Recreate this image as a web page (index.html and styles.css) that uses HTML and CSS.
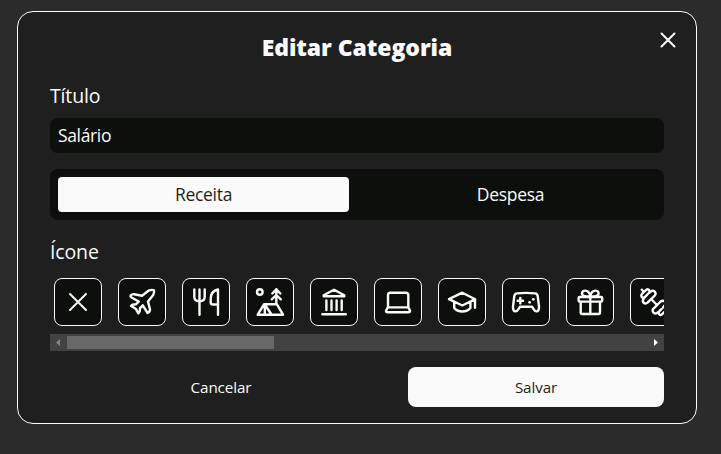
FILE: index.html
```html
<!DOCTYPE html>
<html lang="pt-BR">
<head>
<meta charset="utf-8">
<title>Editar Categoria</title>
<link rel="stylesheet" href="styles.css">
</head>
<body>
<main class="dialog">
  <button class="close" aria-label="Fechar"><svg viewBox="0 0 24 24"><path d="M5.5 5.5l13 13M18.5 5.5l-13 13"/></svg></button>
  <h1 class="title">Editar Categoria</h1>
  <label class="label">Título</label>
  <div class="field">Salário</div>
  <div class="tabs">
    <button class="tab tab-active">Receita</button>
    <button class="tab">Despesa</button>
  </div>
  <div class="label label-icon">Ícone</div>
  <div class="icons">
    <button class="icon icon-none"><svg viewBox="1 1 46 46"><path d="M16 16l16 16M32 16L16 32"/></svg></button>
    <button class="icon"><svg viewBox="1 1 46 46"><path d="M12.8 17.3Q14 16 16 16.2L24 17.8L30.5 12.7Q34 11.3 36 12.3Q36.6 14 35.2 17L30 23.5L32 31.5Q32 34 29.6 35L24.8 27.3L22 30.2L21.7 33.5L20.3 35.3L17.7 30.7L13 28L14.5 26.7L17.8 26.3L20.8 23.5L13.5 19.5Q12.2 18.8 12.8 17.3Z"/></svg></button>
    <button class="icon"><svg viewBox="1 1 46 46"><path d="M12.3 11.5V18.5Q12.3 23 16 23H19Q22.7 23 22.7 18.5V11.5M17.5 11.5V36.7M36 36.7V11.5Q28.7 13 28.7 21V24.5Q28.7 26.5 31 26.5H36"/></svg></button>
    <button class="icon"><svg viewBox="1 1 46 46"><circle cx="13.8" cy="14" r="2.8"/><path d="M30.3 11.3V26M26.3 15.5L30.3 11.3L34.3 15.5M25.8 21.3L30.3 17L34.8 21.3M18 26.3H31L37 36.7H11.7ZM18.8 26.5V36.5M18.8 26.5L25.5 36.5"/></svg></button>
    <button class="icon"><svg viewBox="1 1 46 46"><path d="M24 11.7L34.3 17.2V18.2H13.7V17.2ZM16.4 22.5V32M21.5 22.5V32M26.6 22.5V32M31.7 22.5V32M12.3 36.3H35.8"/></svg></button>
    <button class="icon"><svg viewBox="1 1 46 46"><path d="M14 29.4V17Q14 14.7 16.3 14.7H32Q34.3 14.7 34.3 17V29.4M13.8 29.4H34.5L36 32.8Q36 34.3 34.5 34.3H13.5Q12 34.3 12 32.8Z"/></svg></button>
    <button class="icon"><svg viewBox="1 1 46 46"><path d="M11 21.2L24.3 14.7L37.2 21.2L24.3 27.5ZM16.2 24V30Q19 33.5 24.3 33.5Q29.5 33.5 32.4 30V24M37 21.5V29.7"/></svg></button>
    <button class="icon"><svg viewBox="1 1 46 46"><path d="M15 15.4Q24 14.4 33 15.4Q35.2 15.7 35.7 18L37 28.5Q37.2 33.3 34.5 33.4Q32.8 33.4 31.5 31L30 28.8H18L16.5 31Q15.2 33.4 13.5 33.4Q10.8 33.3 11 28.5L12.3 18Q12.8 15.7 15 15.4ZM18.3 20V25.4M15.6 22.7H21"/><g class="dots"><circle cx="27.6" cy="24.3" r="1.4"/><circle cx="31.3" cy="21.3" r="1.4"/></g></svg></button>
    <button class="icon"><svg viewBox="1 1 46 46"><rect x="12.6" y="19" width="23.6" height="4.6" rx="1.2"/><path d="M14.7 24V34.5Q14.7 36 16.3 36H32.5Q34 36 34 34.5V24M24.3 19V36M24.3 18.8Q15.5 19 16 15Q16.6 12.5 19.5 12.6Q23.6 13 24.3 18.8Q25 13 29.1 12.6Q32 12.5 32.6 15Q33 19 24.3 18.8"/></svg></button>
    <button class="icon"><svg viewBox="1 1 46 46"><path d="M21.2 21.2L27 27M11.7 11.7L14 14M14 14L16.3 11.8Q18.2 10.6 19.3 12.3Q20 13.5 18.8 15L21.2 13.2Q23.2 12 24.9 13.8Q26.4 15.8 24.7 17.6L17.5 24.7Q15.6 26.3 13.7 24.8Q12 23.1 13.4 21.1L15.2 18.7L14.3 19.3Q12.6 20.2 11.5 18.7Q10.7 17.2 12 15.9ZM18.8 15L16.8 17M15.2 18.7L17.2 16.8"/><path d="M36.5 36.5L34.2 34.2M34.2 34.2L31.9 36.4Q30 37.6 28.9 35.9Q28.2 34.7 29.4 33.2L27 35Q25 36.2 23.3 34.4Q21.8 32.4 23.5 30.6L30.7 23.5Q32.6 21.9 34.5 23.4Q36.2 25.1 34.8 27.1L33 29.5L33.9 28.9Q35.6 28 36.7 29.5Q37.5 31 36.2 32.3ZM29.4 33.2L31.4 31.2"/></svg></button>
  </div>
  <div class="scrollbar"><i class="arrow arrow-left"></i><div class="track"><div class="thumb"></div></div><i class="arrow arrow-right"></i></div>
  <div class="actions"><button class="action">Cancelar</button><button class="action save">Salvar</button></div>
</main>
</body>
</html>
```
FILE: styles.css
```css
* { box-sizing: border-box; }
body { margin: 0; height: 454px; padding: 11px 24px 0 17px; background: #2b2b2b; overflow: hidden; color: #fafafa; font-family: "Open Sans", sans-serif; }
button { border: 0; padding: 0; margin: 0; background: none; color: inherit; font-family: inherit; }
svg { display: block; fill: none; stroke: #fafafa; stroke-width: 2; stroke-linecap: round; stroke-linejoin: round; }
.dialog { position: relative; width: 680px; height: 413px; padding: 18px 32px 0; border: 1px solid #fafafa; border-radius: 16px; background: #1f1f1f; }
.close { position: absolute; right: 16px; top: 16px; width: 24px; height: 24px; }
.title { margin: 0; height: 34px; line-height: 34px; text-align: center; font-size: 23px; font-weight: 800; letter-spacing: -0.08px; }
.label { display: block; height: 28px; margin-top: 18px; line-height: 28px; font-size: 19.5px; letter-spacing: -0.15px; }
.field { height: 35px; margin-top: 8px; padding-left: 8px; border-radius: 8px; background: #0d0f0c; font-size: 17.5px; letter-spacing: -0.35px; line-height: 35px; }
.tabs { display: grid; grid-template-columns: 291px 1fr; gap: 16px; height: 51px; margin-top: 16px; padding: 8px; border-radius: 8px; background: #0d0f0c; }
.tab { border-radius: 4px; font-size: 17.5px; letter-spacing: -0.3px; line-height: 35px; }
.tab-active, .save { background: #fafafa; color: #1f1f1f; }
.icons { display: flex; gap: 16px; height: 48px; margin-top: 12px; padding-left: 4px; overflow: hidden; }
.icon { flex: 0 0 48px; height: 48px; border: 1px solid #fafafa; border-radius: 8px; background: #0d0f0c; }
.icon svg { stroke-width: 2.4; }
.icon-none svg { stroke-width: 2; }
.dots { fill: #fafafa; stroke: none; }
.scrollbar { display: flex; align-items: center; height: 17px; margin-top: 8px; background: #424242; }
.track { flex: 1; }
.thumb { width: 207px; height: 13px; background: #686868; }
.arrow { flex: 0 0 17px; height: 7px; background: #868686; clip-path: polygon(6px 3.5px, 10px 0, 10px 7px); }
.arrow-right { background: #fff; clip-path: polygon(7px 0, 11px 3.5px, 7px 7px); }
.actions { display: grid; grid-template-columns: 342px 256px; gap: 16px; height: 40px; margin-top: 16px; }
.action { border-radius: 8px; font-size: 15.2px; letter-spacing: -0.1px; line-height: 40px; }
.label-icon { margin-top: 18px; }
```
